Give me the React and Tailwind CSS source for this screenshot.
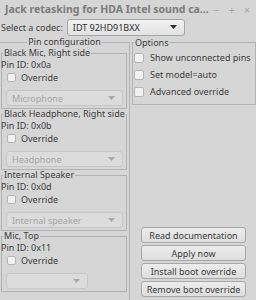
import React from 'react';

const font = { fontFamily: '"Noto Sans", "DejaVu Sans", sans-serif' };

function Check({ label, box }) {
  return (
    <div className="flex items-center h-[17px] shrink-0">
      <span className={'rounded-[2px] border border-[#b4b4b4] bg-[#f2f2f2] shrink-0 ' + box} />
      <span className="text-[#3c3c3c] whitespace-nowrap">{label}</span>
    </div>
  );
}

function Combo({ value, disabled, className }) {
  return (
    <div
      className={
        'flex items-center justify-between h-[16px] rounded-[3px] border px-[5px] shrink-0 ' +
        (disabled
          ? 'border-[#c6c6c6] bg-[#dcdcdc] text-[#a6a6a6] '
          : 'border-[#a6a6a6] bg-gradient-to-b from-[#f2f2f2] to-[#e2e2e2] text-[#2e2e2e] ') +
        className
      }
    >
      <span className="whitespace-nowrap">{value}</span>
      <svg width="7" height="4" viewBox="0 0 7 4" className="mr-[2px] shrink-0">
        <path d="M0 0h7L3.5 4z" fill={disabled ? '#a8a8a8' : '#2e2e2e'} />
      </svg>
    </div>
  );
}

function Pin({ name, id, value, narrow }) {
  return (
    <fieldset className="border border-[#b2b2b2] ml-[1px] mr-[2px] px-0 pb-[2px]">
      <legend className="h-[11px] leading-[10px] ml-[1px] px-[1px] text-[#3c3c3c] whitespace-nowrap">{name}</legend>
      <div className="h-[10px] leading-[10px] text-[#3c3c3c] -ml-[1px] mt-[1px]">Pin ID: {id}</div>
      <div className="-mt-[1px]">
        <Check label="Override" box="w-[9px] h-[9px] ml-[5px] mr-[5px]" />
      </div>
      <Combo
        value={value}
        disabled
        className={'mt-[4px] ml-[4px] ' + (narrow ? 'w-[82px]' : 'w-[117px]')}
      />
    </fieldset>
  );
}

function Button({ label }) {
  return (
    <div className="h-[16px] min-h-[16px] shrink-0 flex items-center justify-center rounded-[3px] border border-[#a8a8a8] bg-gradient-to-b from-[#ececec] to-[#dedede] text-[#3c3c3c] whitespace-nowrap">
      {label}
    </div>
  );
}

export default function App() {
  return (
    <div
      className="w-[256px] h-[300px] bg-[#d6d6d6] flex flex-col overflow-hidden text-[9px] leading-[11px]"
      style={font}
    >
      {/* title bar */}
      <div className="h-[18px] flex items-center pl-[5px] pr-[6px] shrink-0">
        <span className="font-bold text-[10.5px] text-[#7c7c7c] whitespace-nowrap">
          Jack retasking for HDA Intel sound ca...
        </span>
        <div className="ml-auto flex items-center gap-[9px] text-[#a4a4a4] text-[11px]">
          <span>−</span>
          <span>+</span>
          <span>×</span>
        </div>
      </div>

      {/* codec row */}
      <div className="h-[18px] flex items-center shrink-0">
        <span className="ml-[1px] text-[#3c3c3c] whitespace-nowrap">Select a codec:</span>
        <Combo value="IDT 92HD91BXX" className="ml-[4px] w-[118px] h-[17px]" />
      </div>

      <div className="h-[264px] flex mt-[1px] shrink-0">
        {/* left column */}
        <fieldset className="w-[131px] border border-[#b2b2b2] -ml-[1px] px-0 pb-[3px] shrink-0">
          <legend className="mx-auto px-[1px] h-[10px] leading-[10px] text-[#3c3c3c]">
            Pin configuration
          </legend>
          <div className="mt-[1px]">
            <Pin name="Black Mic, Right side" id="0x0a" value="Microphone" />
            <Pin name="Black Headphone, Right side" id="0x0b" value="Headphone" />
            <Pin name="Internal Speaker" id="0x0d" value="Internal speaker" />
            <Pin name="Mic, Top" id="0x11" value="" narrow />
          </div>
        </fieldset>

        {/* right column */}
        <div className="flex-1 min-w-0 h-[264px] flex flex-col justify-between ml-[2px]">
          <fieldset className="border border-[#b2b2b2] px-0 pb-[4px]">
            <legend className="ml-[1px] px-[1px] h-[11px] leading-[11px] text-[#3c3c3c]">Options</legend>
            <div className="mt-[1px]">
              <Check label="Show unconnected pins" box="w-[10px] h-[10px] ml-[1px] mr-[6px]" />
              <Check label="Set model=auto" box="w-[10px] h-[10px] ml-[1px] mr-[6px]" />
              <Check label="Advanced override" box="w-[10px] h-[10px] ml-[1px] mr-[6px]" />
            </div>
          </fieldset>
          <div className="h-[70px] flex flex-col gap-[2px] ml-[9px] mr-[10px] mb-[4px] shrink-0">
            <Button label="Read documentation" />
            <Button label="Apply now" />
            <Button label="Install boot override" />
            <Button label="Remove boot override" />
          </div>
        </div>
      </div>
    </div>
  );
}
